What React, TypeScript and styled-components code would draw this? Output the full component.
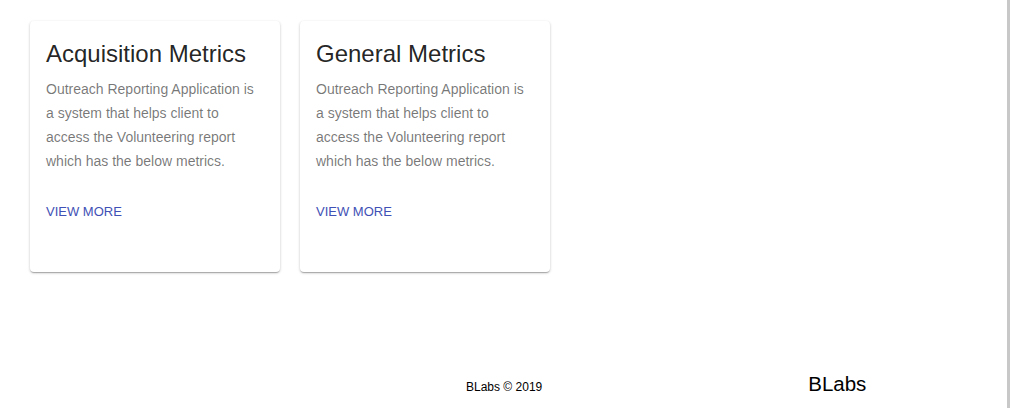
import React from "react";
import styled, { createGlobalStyle } from "styled-components";

const GlobalStyle = createGlobalStyle`
  html, body {
    margin: 0;
    padding: 0;
    background: #fff;
    font-family: "Liberation Sans", Arial, sans-serif;
  }
`;

const Page = styled.div`
  width: 1007px;
  height: 408px;
  border-right: 3px solid #c8c8c8;
  display: flex;
  flex-direction: column;
`;

const CardRow = styled.div`
  display: flex;
  gap: 20px;
  padding: 21px 0 0 30px;
`;

const Card = styled.div`
  width: 250px;
  height: 251px;
  box-sizing: border-box;
  padding: 17px 16px 16px;
  border-radius: 4px;
  background: #fff;
  box-shadow: 0 1px 3px rgba(0, 0, 0, 0.2), 0 1px 1px rgba(0, 0, 0, 0.14),
    0 2px 1px -1px rgba(0, 0, 0, 0.12);
`;

const Title = styled.h2`
  margin: 0 0 7px;
  font-size: 24px;
  font-weight: 400;
  line-height: 32px;
  color: rgba(0, 0, 0, 0.87);
`;

const Body = styled.p`
  margin: 0;
  font-size: 14px;
  line-height: 24px;
  color: rgba(0, 0, 0, 0.54);
`;

const Action = styled.a`
  display: inline-block;
  margin-top: 27px;
  font-size: 13px;
  line-height: 24px;
  color: #3f51b5;
  text-transform: uppercase;
  text-decoration: none;
`;

const Footer = styled.footer`
  margin-top: auto;
  display: flex;
  align-items: baseline;
  padding-bottom: 12px;
`;

const Copy = styled.span`
  margin-left: 466px;
  font-size: 12px;
  color: #000;
`;

const Brand = styled.span`
  margin-left: 266px;
  font-size: 20.5px;
  color: #000;
`;

const text =
  "Outreach Reporting Application is a system that helps client to access the Volunteering report which has the below metrics.";

const cards = ["Acquisition Metrics", "General Metrics"];

export default function App() {
  return (
    <>
      <GlobalStyle />
      <Page>
        <CardRow>
          {cards.map((c) => (
            <Card key={c}>
              <Title>{c}</Title>
              <Body>{text}</Body>
              <Action href="#">View More</Action>
            </Card>
          ))}
        </CardRow>
        <Footer>
          <Copy>BLabs © 2019</Copy>
          <Brand>BLabs</Brand>
        </Footer>
      </Page>
    </>
  );
}
